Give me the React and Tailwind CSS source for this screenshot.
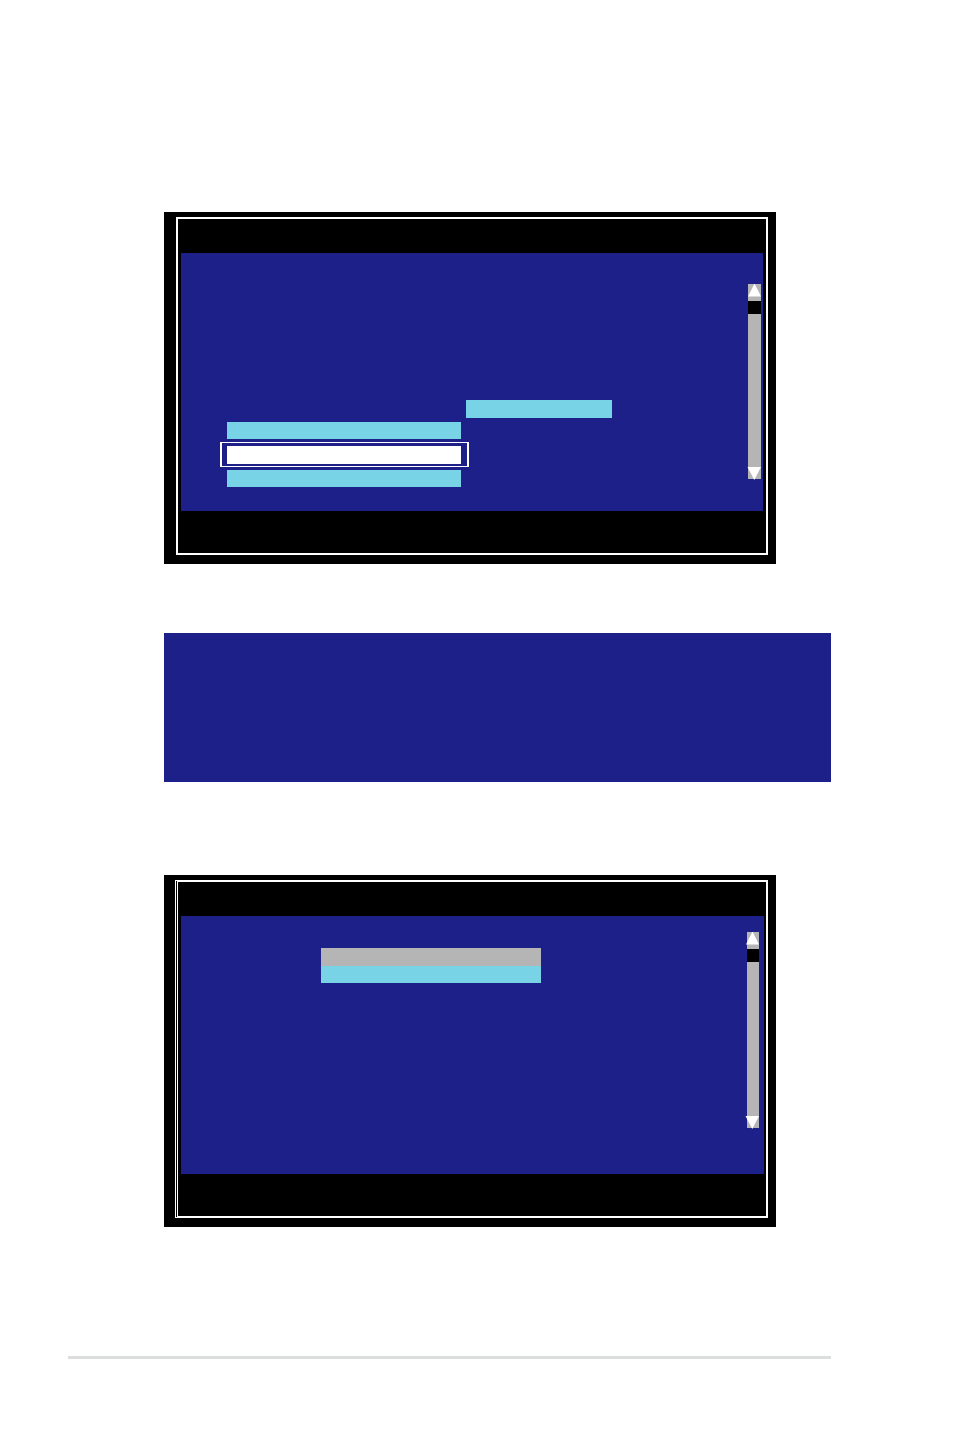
import clsx from "clsx";

function ArrowUp() {
  return (
    <svg viewBox="0 0 14 13" className="block h-[13px] w-[14px] shrink-0" aria-hidden="true">
      <path d="M6.5 -0.5 L13 12.5 H0 Z" fill="#fff" />
    </svg>
  );
}

function ArrowDown() {
  return (
    <svg viewBox="0 0 14 13" className="block h-[13px] w-[14px] shrink-0 overflow-visible" aria-hidden="true">
      <path d="M0.5 1 H14 L7.3 14 Z" fill="#fff" />
    </svg>
  );
}

function ScrollBar({ className }) {
  return (
    <div className={clsx("flex shrink-0 flex-col bg-[#b5b5b6]", className)}>
      <button type="button" aria-label="Scroll up" className="flex h-[17px] justify-center">
        <ArrowUp />
      </button>
      <div className="h-[13px] bg-black" />
      <div className="flex-1" />
      <button type="button" aria-label="Scroll down" className="flex h-[13px] justify-end">
        <ArrowDown />
      </button>
    </div>
  );
}

function Screen({ frameClass, className, children }) {
  return (
    <section className={clsx("mr-[55px] bg-black pt-[5px] pr-2 pb-[9px]", className)}>
      <div className={clsx("border-2 border-white pt-[34px] pb-[42px] pl-[3px]", frameClass)}>
        <div className="flex justify-between bg-[#1d2088]">{children}</div>
      </div>
    </section>
  );
}

export default function App() {
  return (
    <main className="bg-white pt-[212px] pr-[123px] pb-[78px] pl-[68px]">
      <div className="pl-24">
        <Screen className="pl-3" frameClass="pr-[3px]">
          <div className="pt-[147px] pb-6 pl-[39px]">
            <div className="ml-[246px] h-[18px] w-[146px] bg-[#78d3e6]" />
            <div className="mt-1 ml-[7px] h-[17px] w-[234px] bg-[#78d3e6]" />
            {/* selected row */}
            <div className="my-[3px] w-[249px] border-x-2 border-y border-white px-[5px] pt-[3px] pb-[2px]">
              <div className="h-[18px] w-[234px] bg-white" />
            </div>
            <div className="ml-[7px] h-[17px] w-[234px] bg-[#78d3e6]" />
          </div>
          <ScrollBar className="mt-[31px] mr-[2px] mb-8 w-[13px]" />
        </Screen>

        <div className="mt-[69px] h-[149px] bg-[#1d2088]" />

        <Screen
          className="mt-[93px] pl-[11px]"
          frameClass="border-l-[3px] pr-[2px] [border-left-style:double]"
        >
          <div className="pt-8 pb-[191px] pl-[140px]">
            <div className="h-[18px] w-[220px] bg-[#b5b5b6]" />
            <div className="h-[17px] w-[220px] bg-[#78d3e6]" />
          </div>
          <ScrollBar className="mt-4 mr-[5px] mb-[46px] w-3" />
        </Screen>
      </div>

      <hr className="mt-[129px] border-t-3 border-[#dcdddd]" />
    </main>
  );
}
